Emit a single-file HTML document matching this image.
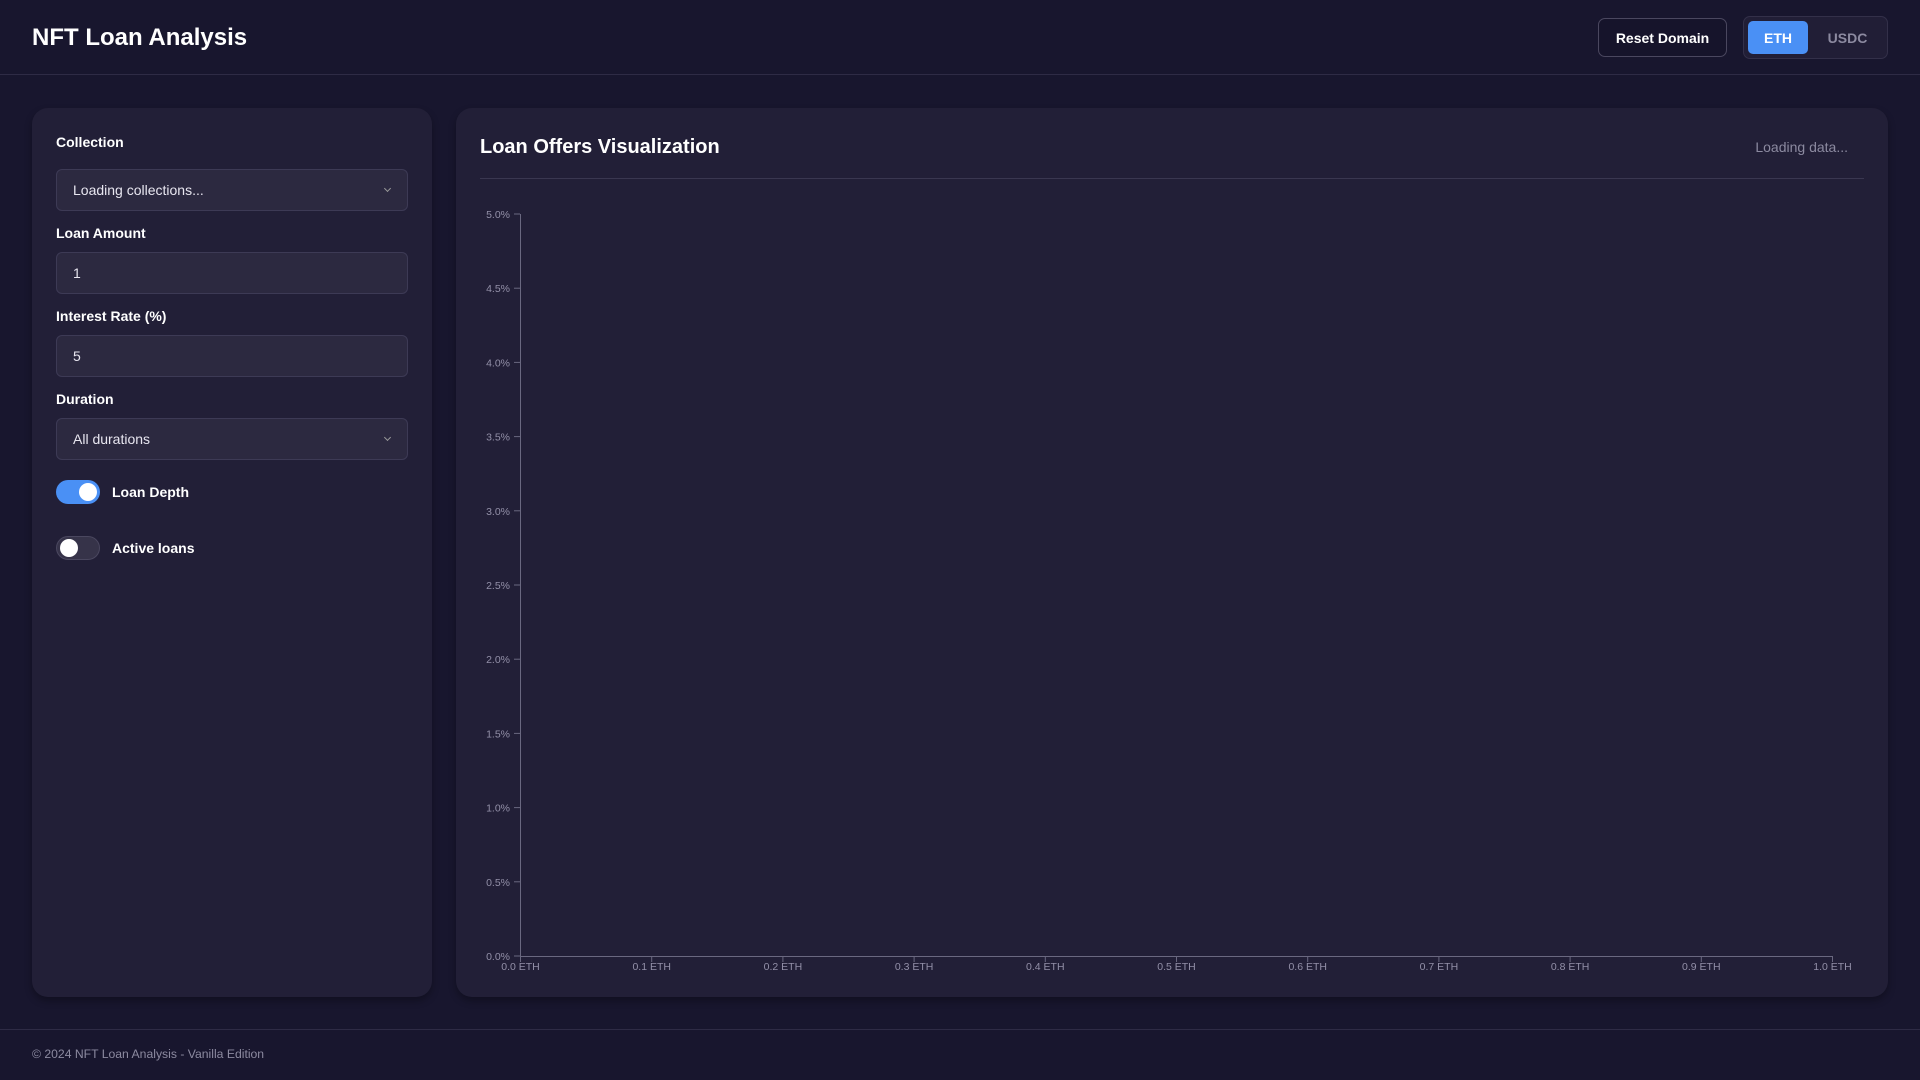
<!DOCTYPE html>
<html><head><meta charset="utf-8"><style>
*{box-sizing:border-box;margin:0;padding:0}
body{width:1920px;height:1080px;background:#18162e;font-family:"Liberation Sans",sans-serif;color:#fff;position:relative;overflow:hidden}
.abs{position:absolute}
.hdr{left:0;top:0;width:1920px;height:75px;border-bottom:1px solid #2e2b45}
.title{left:32px;top:24px;font-size:24px;font-weight:bold}
.reset{left:1598px;top:18px;width:129px;height:39px;border:1px solid #4a475f;border-radius:7px;font-size:14px;font-weight:bold;display:flex;align-items:center;justify-content:center;background:#16142b}
.grp{left:1743px;top:16px;width:145px;height:43px;border:1px solid #333049;border-radius:7px;background:#211e36}
.eth{left:1748px;top:21px;width:60px;height:33px;background:#4a90f5;border-radius:5px;font-size:14px;font-weight:bold;display:flex;align-items:center;justify-content:center}
.usdc{left:1810px;top:21px;width:75px;height:33px;font-size:14px;font-weight:bold;color:#8c8aa0;display:flex;align-items:center;justify-content:center}
.panel{background:#221f37;border-radius:16px;box-shadow:0 4px 8px rgba(0,0,0,.3)}
.lbl{left:56px;font-size:14px;font-weight:bold}
.inp{left:56px;width:352px;height:42px;background:#2c2940;border:1px solid #3d3a55;border-radius:6px;font-size:14px;padding-left:16px;display:flex;align-items:center;color:#e8e6f0}
.chev{position:absolute;right:17px;top:16px;width:5px;height:5px;border-right:1.2px solid #999;border-bottom:1.2px solid #999;transform:rotate(45deg)}
.tog{left:56px;width:44px;height:24px;border-radius:12px}
.knob{position:absolute;top:3px;width:18px;height:18px;border-radius:50%;background:#fff}
.tl{left:112px;font-size:14px;font-weight:bold}
</style></head><body>
<div class="abs hdr"></div>
<div class="abs title">NFT Loan Analysis</div>
<div class="abs reset">Reset Domain</div>
<div class="abs grp"></div>
<div class="abs eth">ETH</div>
<div class="abs usdc">USDC</div>

<div class="abs panel" style="left:32px;top:108px;width:400px;height:889px"></div>
<div class="abs lbl" style="top:134px">Collection</div>
<div class="abs inp" style="top:169px">Loading collections...<span class="chev"></span></div>
<div class="abs lbl" style="top:225px">Loan Amount</div>
<div class="abs inp" style="top:252px">1</div>
<div class="abs lbl" style="top:308px">Interest Rate (%)</div>
<div class="abs inp" style="top:335px">5</div>
<div class="abs lbl" style="top:391px">Duration</div>
<div class="abs inp" style="top:418px">All durations<span class="chev"></span></div>
<div class="abs tog" style="top:480px;background:#4a90f5"><div class="knob" style="left:23px"></div></div>
<div class="abs tl" style="top:484px">Loan Depth</div>
<div class="abs tog" style="top:536px;background:#363349;border:1px solid #4a475f"><div class="knob" style="left:3px;top:2px"></div></div>
<div class="abs tl" style="top:540px">Active loans</div>

<div class="abs panel" style="left:456px;top:108px;width:1432px;height:889px"></div>
<div class="abs" style="left:480px;top:136px;font-size:20px;font-weight:bold">Loan Offers Visualization</div>
<div class="abs" style="left:1700px;top:139px;width:148px;text-align:right;font-size:14px;color:#8c8aa0">Loading data...</div>
<div class="abs" style="left:480px;top:178px;width:1384px;height:1px;background:#3a3750"></div>

<svg class="abs" style="left:0;top:0" width="1920" height="1080">
<g stroke="#6a6880" stroke-width="1" fill="none">
<line x1="520.5" y1="214" x2="520.5" y2="956"/>
<line x1="520" y1="956.5" x2="1833" y2="956.5"/>
</g>
<g font-family="Liberation Sans" font-size="10.5" fill="#9390a8" text-anchor="end" id="y"></g>
<g font-family="Liberation Sans" font-size="10.5" fill="#9390a8" text-anchor="middle" id="x"></g>
</svg>
<script>
var y=document.getElementById('y'),x=document.getElementById('x'),s='';
for(var i=0;i<=10;i++){var yy=956-i*74.2;s+='<line x1="514" x2="520" y1="'+yy+'" y2="'+yy+'" stroke="#6a6880"/><text x="510" y="'+(yy+4)+'">'+(i*0.5).toFixed(1)+'%</text>';}
y.innerHTML=s;s='';
for(var i=0;i<=10;i++){var xx=520.5+i*131.2;s+='<line x1="'+xx+'" x2="'+xx+'" y1="956" y2="962" stroke="#6a6880"/><text x="'+xx+'" y="970">'+(i/10).toFixed(1)+' ETH</text>';}
x.innerHTML=s;
</script>

<div class="abs" style="left:0;top:1029px;width:1920px;height:1px;background:#2e2b45"></div>
<div class="abs" style="left:32px;top:1047px;font-size:12.2px;color:#8c8aa0">© 2024 NFT Loan Analysis - Vanilla Edition</div>
</body></html>
